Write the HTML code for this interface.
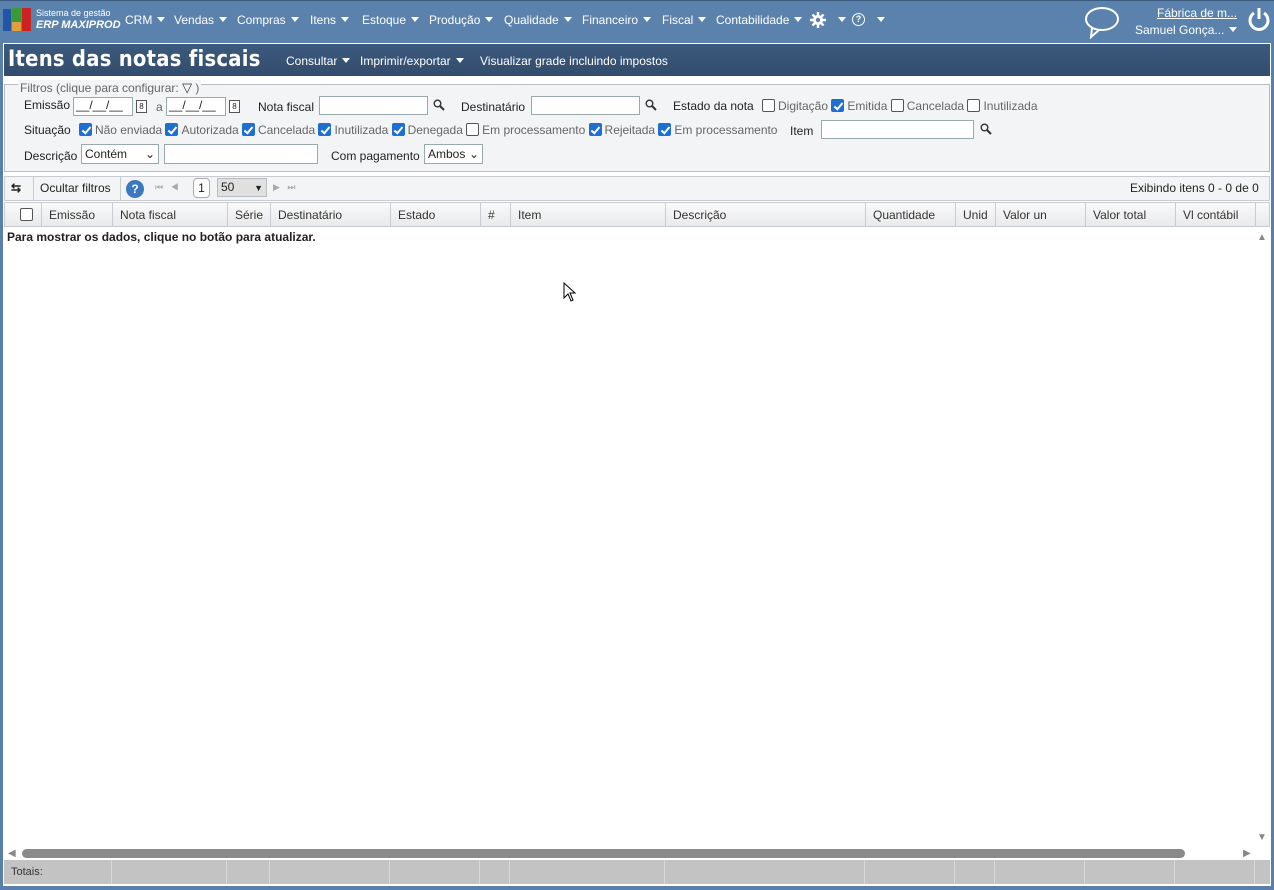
<!DOCTYPE html>
<html><head><meta charset="utf-8"><style>
*{box-sizing:border-box;margin:0;padding:0}
body{width:1274px;height:890px;background:#5a7fa9;font-family:"Liberation Sans",sans-serif;font-size:12px;color:#222;position:relative;overflow:hidden}
.abs{position:absolute}
.top{left:0;top:0;width:1274px;height:42px;background:#5b82ad;border-top:1px solid #3a5a80}
.nav{top:13px;color:#fff;font-size:12px;white-space:nowrap}
.tri{display:inline-block;width:0;height:0;border-left:4px solid transparent;border-right:4px solid transparent;border-top:5px solid #fff;margin-left:5px;vertical-align:2px}
.main{left:3px;top:43px;width:1268px;height:843px;background:#fff;border:1px solid #fff}
.title{left:4px;top:44px;width:1266px;height:32px;background:linear-gradient(#3c5a7e,#324c6c)}
.filt{left:4px;top:84px;width:1266px;height:88px;background:#f3f4f6;border:1px solid #b8bcc2}
.lbl{color:#222;font-size:12px;white-space:nowrap}
.gray{color:#666}
.inp{border:1px solid #9aa;background:#fff;height:19px}
.cb{display:inline-block;width:13px;height:13px;border:1px solid #555;border-radius:2px;background:#fff;vertical-align:-2px;margin-right:3px}
.cb.on{background:#1e6fd0;border-color:#1e6fd0;position:relative}
.cb.on:after{content:"";position:absolute;left:3.5px;top:0.5px;width:3px;height:7px;border:solid #fff;border-width:0 2px 2px 0;transform:rotate(40deg)}
.tool{left:4px;top:176px;width:1266px;height:25px;background:#f3f4f6;border:1px solid #c8ccd0}
.hdr{left:4px;top:202px;width:1266px;height:25px;background:linear-gradient(#fafafa,#e8e9eb);border:1px solid #c8ccd0}
.hc{position:absolute;top:0;height:23px;border-right:1px solid #c8ccd0;padding:5px 0 0 7px;font-size:12px;color:#333}
.tot{left:4px;top:860px;width:1266px;height:24px;background:#c3c3c3}
.tc{position:absolute;top:0;height:24px;border-right:1px solid #d8d8d8}
.cal{width:11px;height:13px;border:1px solid #555;background:#fff;font-size:8px;text-align:center;line-height:11px}
</style></head><body>
<div class="abs top"></div>
<div class="abs" style="left:3px;top:9px;width:8px;height:22px;background:#1f56a8"></div>
<div class="abs" style="left:12px;top:8px;width:9px;height:14px;background:#3a9a3a"></div>
<div class="abs" style="left:12px;top:22px;width:9px;height:9px;background:#e0a040"></div>
<div class="abs" style="left:22px;top:8px;width:9px;height:23px;background:#cc2222"></div>
<div class="abs" style="left:36px;top:8px;color:#fff;font-size:9px">Sistema de gestão</div>
<div class="abs" style="left:36px;top:19px;color:#fff;font-size:11px;font-style:italic;font-weight:bold">ERP MAXIPROD</div>
<div class="abs nav" style="left:125px">CRM<span class="tri"></span></div>
<div class="abs nav" style="left:174px">Vendas<span class="tri"></span></div>
<div class="abs nav" style="left:237px">Compras<span class="tri"></span></div>
<div class="abs nav" style="left:310px">Itens<span class="tri"></span></div>
<div class="abs nav" style="left:362px">Estoque<span class="tri"></span></div>
<div class="abs nav" style="left:429px">Produção<span class="tri"></span></div>
<div class="abs nav" style="left:504px">Qualidade<span class="tri"></span></div>
<div class="abs nav" style="left:582px">Financeiro<span class="tri"></span></div>
<div class="abs nav" style="left:662px">Fiscal<span class="tri"></span></div>
<div class="abs nav" style="left:716px">Contabilidade<span class="tri"></span></div>
<svg class="abs" style="left:810px;top:12px" width="16" height="16"><g stroke="#fff" stroke-width="2.5"><line x1="8" y1="0" x2="8" y2="16"/><line x1="0" y1="8" x2="16" y2="8"/><line x1="2.5" y1="2.5" x2="13.5" y2="13.5"/><line x1="13.5" y1="2.5" x2="2.5" y2="13.5"/></g><circle cx="8" cy="8" r="5" fill="#fff"/><circle cx="8" cy="8" r="2.2" fill="#5b82ad"/></svg>
<div class="abs nav" style="left:833px"><span class="tri"></span></div>
<div class="abs" style="left:852px;top:13px;width:13px;height:13px;border:1.5px solid #fff;border-radius:50%;color:#fff;font-size:9px;text-align:center;line-height:10px;font-weight:bold">?</div>
<div class="abs nav" style="left:872px"><span class="tri"></span></div>
<svg class="abs" style="left:1083px;top:5px" width="38" height="34"><ellipse cx="19" cy="14" rx="16" ry="11" fill="none" stroke="#fff" stroke-width="2"/><path d="M9 23 L8 32 L16 25" fill="none" stroke="#fff" stroke-width="2"/></svg>
<div class="abs" style="left:1157px;top:6px;color:#fff;text-decoration:underline;font-size:12px">Fábrica de m...</div>
<div class="abs nav" style="left:1135px;top:23px">Samuel Gonça...<span class="tri"></span></div>
<svg class="abs" style="left:1247px;top:6px" width="24" height="26"><path d="M7 7 A9 9 0 1 0 17 7" fill="none" stroke="#fff" stroke-width="3"/><line x1="12" y1="2" x2="12" y2="13" stroke="#fff" stroke-width="3"/></svg>
<div class="abs main"></div>
<div class="abs title"></div>
<div class="abs" style="left:8px;top:47px;color:#fff;font-size:22px;font-weight:bold;letter-spacing:0.3px;font-family:'DejaVu Sans',sans-serif;transform:scaleX(0.89);transform-origin:left;white-space:nowrap">Itens das notas fiscais</div>
<div class="abs nav" style="left:286px;top:54px">Consultar<span class="tri"></span></div>
<div class="abs nav" style="left:360px;top:54px">Imprimir/exportar<span class="tri"></span></div>
<div class="abs nav" style="left:480px;top:54px">Visualizar grade incluindo impostos</div>
<div class="abs filt"></div>
<div class="abs gray" style="left:18px;top:80px;background:#f3f4f6;padding:0 2px;font-size:12px">Filtros (clique para configurar: <b style="font-weight:normal;font-size:13px;color:#333">▽</b> )</div>
<div class="abs lbl" style="left:24px;top:98px">Emissão</div>
<div class="abs inp" style="left:73px;top:97px;width:60px;padding-left:2px">__/__/__</div>
<div class="abs cal" style="left:136px;top:100px">8</div>
<div class="abs lbl gray" style="left:156px;top:100px">a</div>
<div class="abs inp" style="left:166px;top:97px;width:60px;padding-left:2px">__/__/__</div>
<div class="abs cal" style="left:229px;top:100px">8</div>
<div class="abs lbl" style="left:258px;top:100px">Nota fiscal</div>
<div class="abs inp" style="left:319px;top:96px;width:109px"></div>
<svg class="abs" style="left:433px;top:99px" width="12" height="12"><circle cx="4.5" cy="4.5" r="3.3" fill="none" stroke="#333" stroke-width="1.4"/><line x1="7" y1="7" x2="11" y2="11" stroke="#333" stroke-width="2"/></svg>
<div class="abs lbl" style="left:461px;top:100px">Destinatário</div>
<div class="abs inp" style="left:531px;top:96px;width:109px"></div>
<svg class="abs" style="left:645px;top:99px" width="12" height="12"><circle cx="4.5" cy="4.5" r="3.3" fill="none" stroke="#333" stroke-width="1.4"/><line x1="7" y1="7" x2="11" y2="11" stroke="#333" stroke-width="2"/></svg>
<div class="abs lbl" style="left:673px;top:99px">Estado da nota</div>
<div class="abs lbl gray" style="left:762px;top:99px"><span class="cb"></span>Digitação <span class="cb on"></span>Emitida <span class="cb"></span>Cancelada <span class="cb"></span>Inutilizada</div>
<div class="abs lbl" style="left:24px;top:123px">Situação</div>
<div class="abs lbl gray" style="left:79px;top:123px;letter-spacing:-0.02px"><span class="cb on"></span>Não enviada <span class="cb on"></span>Autorizada <span class="cb on"></span>Cancelada <span class="cb on"></span>Inutilizada <span class="cb on"></span>Denegada <span class="cb"></span>Em processamento <span class="cb on"></span>Rejeitada <span class="cb on"></span>Em processamento</div>
<div class="abs lbl" style="left:790px;top:124px">Item</div>
<div class="abs inp" style="left:821px;top:120px;width:153px"></div>
<svg class="abs" style="left:980px;top:123px" width="12" height="12"><circle cx="4.5" cy="4.5" r="3.3" fill="none" stroke="#333" stroke-width="1.4"/><line x1="7" y1="7" x2="11" y2="11" stroke="#333" stroke-width="2"/></svg>
<div class="abs lbl" style="left:24px;top:149px">Descrição</div>
<div class="abs inp" style="left:81px;top:144px;width:78px;height:20px;padding:2px 3px">Contém <span style="float:right">⌄</span></div>
<div class="abs inp" style="left:164px;top:144px;width:154px;height:20px"></div>
<div class="abs lbl" style="left:331px;top:149px">Com pagamento</div>
<div class="abs inp" style="left:424px;top:144px;width:59px;height:20px;padding:2px 3px">Ambos<span style="float:right">⌄</span></div>
<div class="abs tool"></div>
<div class="abs lbl" style="left:11px;top:181px;font-weight:bold">⇆</div>
<div class="abs" style="left:33px;top:177px;width:1px;height:23px;background:#c8ccd0"></div>
<div class="abs lbl" style="left:40px;top:181px">Ocultar filtros</div>
<div class="abs" style="left:120px;top:177px;width:1px;height:23px;background:#c8ccd0"></div>
<div class="abs" style="left:126px;top:180px;width:18px;height:18px;border-radius:50%;background:#3a78c0;color:#fff;font-weight:bold;text-align:center;line-height:18px">?</div>
<div class="abs lbl" style="left:155px;top:182px;color:#aaa;font-size:9px">⏮&nbsp;&nbsp; ◀</div>
<div class="abs" style="left:193px;top:178px;width:17px;height:20px;border:1px solid #aaa;border-radius:4px;background:#fff;text-align:center;line-height:18px">1</div>
<div class="abs" style="left:217px;top:178px;width:50px;height:19px;border:1px solid #bbb;background:#e0e0e0;padding:1px 3px">50<span style="float:right;font-size:9px;margin-top:3px">▼</span></div>
<div class="abs lbl" style="left:273px;top:182px;color:#aaa;font-size:9px">▶&nbsp;&nbsp; ⏭</div>
<div class="abs lbl" style="left:1130px;top:181px">Exibindo itens 0 - 0 de 0</div>
<div class="abs hdr">
<div class="hc" style="left:0;width:37px"><span class="cb" style="margin-left:8px"></span></div>
<div class="hc" style="left:37px;width:71px">Emissão</div>
<div class="hc" style="left:108px;width:115px">Nota fiscal</div>
<div class="hc" style="left:223px;width:43px">Série</div>
<div class="hc" style="left:266px;width:120px">Destinatário</div>
<div class="hc" style="left:386px;width:90px">Estado</div>
<div class="hc" style="left:476px;width:30px">#</div>
<div class="hc" style="left:506px;width:155px">Item</div>
<div class="hc" style="left:661px;width:200px">Descrição</div>
<div class="hc" style="left:861px;width:90px">Quantidade</div>
<div class="hc" style="left:951px;width:40px">Unid</div>
<div class="hc" style="left:991px;width:90px">Valor un</div>
<div class="hc" style="left:1081px;width:90px">Valor total</div>
<div class="hc" style="left:1171px;width:80px">Vl contábil</div>
</div>
<div class="abs" style="left:7px;top:230px;font-weight:bold;font-size:12px;color:#222">Para mostrar os dados, clique no botão para atualizar.</div>
<svg class="abs" style="left:563px;top:282px" width="14" height="20"><path d="M1 1 L1 16 L5 12 L8 19 L10 18 L7 11 L12 11 Z" fill="#fff" stroke="#000"/></svg>
<div class="abs" style="left:1257px;top:232px;font-size:10px;color:#888">▲</div>
<div class="abs" style="left:1257px;top:832px;font-size:10px;color:#888">▼</div>
<div class="abs" style="left:8px;top:848px;font-size:10px;color:#888">◀</div>
<div class="abs" style="left:1243px;top:848px;font-size:10px;color:#888">▶</div>
<div class="abs" style="left:22px;top:849px;width:1163px;height:9px;border-radius:5px;background:#8a8a8a"></div>
<div class="abs tot">
<div class="tc" style="left:0;width:108px"></div><div class="tc" style="left:108px;width:115px"></div><div class="tc" style="left:223px;width:43px"></div><div class="tc" style="left:266px;width:120px"></div><div class="tc" style="left:386px;width:90px"></div><div class="tc" style="left:476px;width:30px"></div><div class="tc" style="left:506px;width:155px"></div><div class="tc" style="left:661px;width:200px"></div><div class="tc" style="left:861px;width:90px"></div><div class="tc" style="left:951px;width:40px"></div><div class="tc" style="left:991px;width:90px"></div><div class="tc" style="left:1081px;width:90px"></div><div class="tc" style="left:1171px;width:80px"></div>
<div class="abs" style="left:7px;top:6px;font-size:11px;color:#333">Totais:</div>
</div>
</body></html>
